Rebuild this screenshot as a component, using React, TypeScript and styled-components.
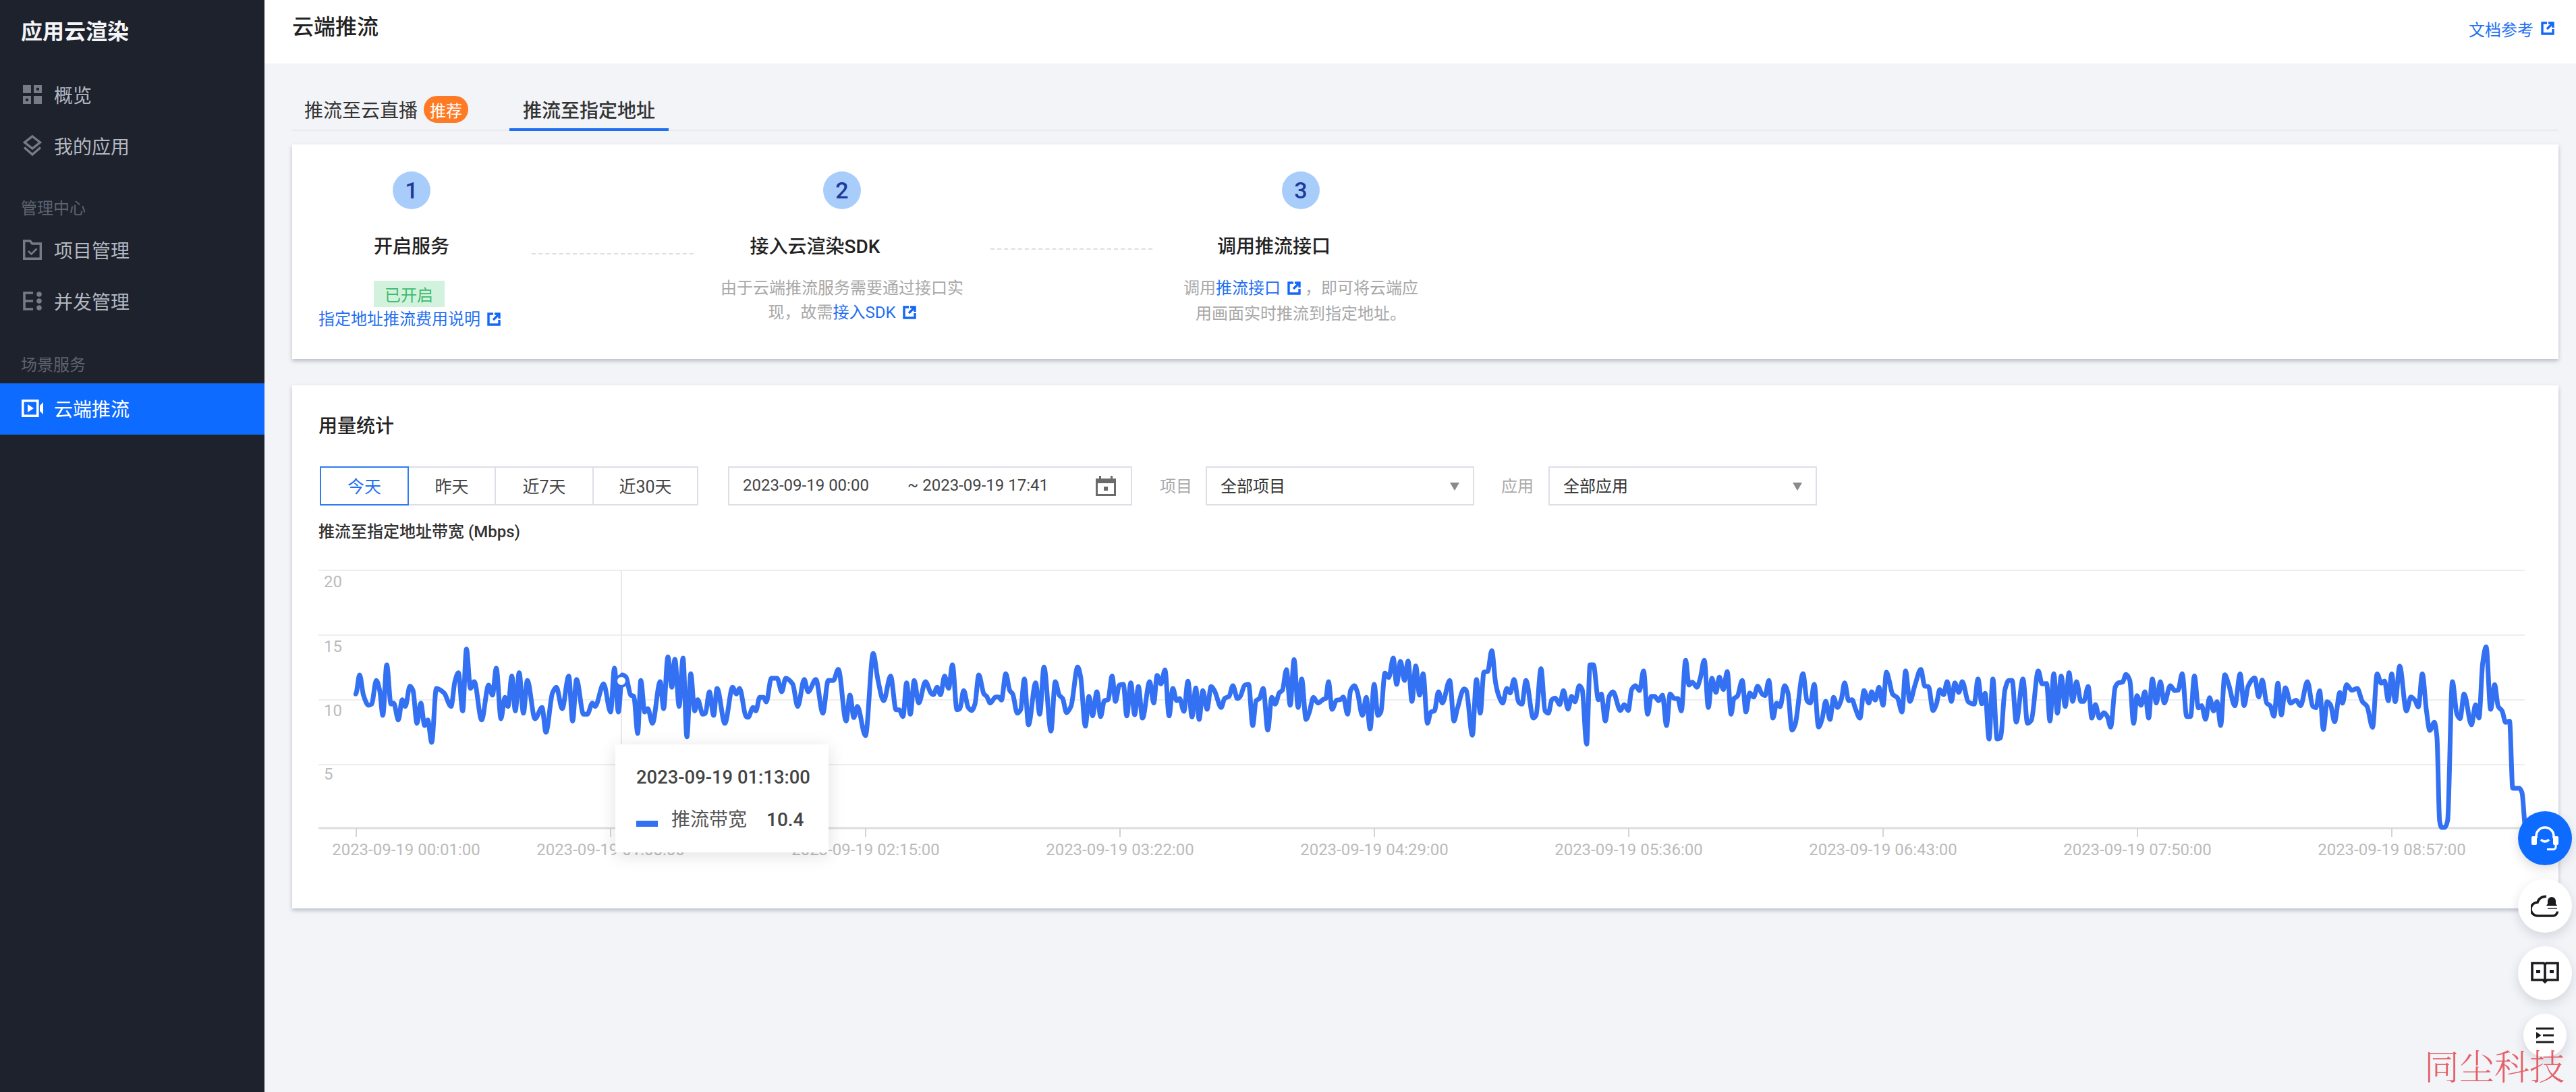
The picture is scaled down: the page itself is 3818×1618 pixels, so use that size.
import React from "react";
import styled, { createGlobalStyle } from "styled-components";

const GlobalStyle = createGlobalStyle`
  html, body { margin: 0; padding: 0; height: 100%; background: #f2f4f8; }
  body { font-family: Roboto, "Noto Sans CJK SC", sans-serif; color: #222; overflow: hidden; }
  #root { height: 100%; }
  * { box-sizing: border-box; }
`;

const Shell = styled.div`display: flex; height: 1618px; width: 3818px; position: relative; overflow: hidden;`;

/* ---------- sidebar ---------- */
const Sidebar = styled.aside`width: 392px; flex: none; background: #1e222d; display: flex; flex-direction: column;`;
const Logo = styled.div`height: 103px; padding: 24px 0 0 31px; font-size: 32px; line-height: 46px; font-weight: 700; color: #f4f5f7;`;
const NavRow = styled.div<{ $active?: boolean }>`
  height: 76px; display: flex; align-items: center; gap: 18px; padding: 0 0 2px 34px;
  font-size: 28px; color: ${p => (p.$active ? "#fff" : "#b4b8c1")};
  background: ${p => (p.$active ? "#0d6bff" : "transparent")};
`;
const NavIcon = styled.span<{ $active?: boolean }>`
  width: 28px; height: 28px; display: flex; align-items: center; justify-content: center; flex: none;
  color: ${p => (p.$active ? "#fff" : "#767c87")};
  svg { overflow: visible; flex: none; }
`;
const SectionLabel = styled.div<{ $top: number; $bottom: number }>`
  padding: ${p => p.$top}px 0 ${p => p.$bottom}px 31px; font-size: 24px; line-height: 34px; color: #5d636e;
`;

/* ---------- main ---------- */
const Main = styled.main`flex: 1; min-width: 0; display: flex; flex-direction: column;`;
const Header = styled.header`
  height: 94px; flex: none; background: #fff; display: flex; justify-content: space-between; align-items: flex-start;
  padding: 16px 32px 0 41px;
`;
const PageTitle = styled.h1`margin: 0; font-size: 32px; line-height: 48px; font-weight: 500; color: #222;`;
const DocLink = styled.a`display: flex; align-items: center; gap: 11px; margin-top: 2px; height: 48px; font-size: 24px; color: #1f6ff2;`;
const Body = styled.div`flex: 1; padding: 36px 26px 0 41px; display: flex; flex-direction: column;`;

const Tabs = styled.div`display: flex; gap: 41px; height: 64px; padding-left: 0; border-bottom: 2px solid #e7eaef; flex: none;`;
const Tab = styled.div<{ $active?: boolean; $first?: boolean }>`
  height: 64px; padding: 4px 20px 0 ${p => (p.$first ? 18 : 20)}px; display: flex; align-items: center; gap: 9px; font-size: 28px; color: #333;
  font-weight: ${p => (p.$active ? 500 : 400)};
  border-bottom: 4px solid ${p => (p.$active ? "#1f6ff2" : "transparent")};
`;
const Badge = styled.span`
  width: 66px; height: 40px; border-radius: 20px; background: #ff7a24; color: #fff; font-size: 24px;
  display: flex; align-items: center; justify-content: center;
`;

const Card = styled.section<{ $height: number; $top: number }>`
  height: ${p => p.$height}px; margin-top: ${p => p.$top}px; flex: none; background: #fff; padding: 0 50px 0 39px;
  box-shadow: 0 3px 6px rgba(54, 58, 80, 0.3);
`;

const Steps = styled.div`display: flex; gap: 40px; align-items: flex-start; padding-top: 40px;`;
const Step = styled.div<{ $width: number }>`
  width: ${p => p.$width}px; flex: none; display: flex; flex-direction: column; align-items: center;
`;
const StepNum = styled.div`
  width: 56px; height: 56px; border-radius: 50%; background: #a9cdfb; color: #1d3a9d; font-size: 34px; font-weight: 500;
  display: flex; align-items: center; justify-content: center;
`;
const StepTitle = styled.div<{ $shift?: number }>`
  margin-top: 36px; margin-right: ${p => p.$shift ?? 0}px; font-size: 28px; line-height: 40px; font-weight: 500; color: #222; white-space: nowrap;
`;
const StatusTag = styled.div`
  margin-top: 30px; margin-right: 8px; width: 105px; height: 39px; background: #d2f2dd; color: #3dbb6b; font-size: 24px;
  display: flex; align-items: center; justify-content: center;
`;
const LinkText = styled.a<{ $shift?: number }>`
  color: #1f6ff2; font-size: 24px; line-height: 36px; white-space: nowrap; margin-right: ${p => p.$shift ?? 0}px;
`;
const ExtIconWrap = styled.span`display: inline-block; margin: 0 0 0 10px; vertical-align: -2px;`;
const StepDesc = styled.div`margin-top: 23px; font-size: 24px; line-height: 36px; color: #a8a8a8; text-align: center;`;
const DashLine = styled.div<{ $top: number }>`
  width: 240px; flex: none; margin-top: ${p => p.$top}px; border-top: 2px dashed #dedede;
`;

const CardTitle = styled.h2`margin: 0; padding-top: 41px; font-size: 28px; line-height: 40px; font-weight: 500; color: #222;`;
const Toolbar = styled.div`display: flex; align-items: stretch; height: 58px; margin: 39px 0 0 2px;`;
const Segment = styled.div`display: flex;`;
const SegBtn = styled.div<{ $width: number; $active?: boolean }>`
  width: ${p => p.$width}px; margin-left: -2px; padding-bottom: 3px; display: flex; align-items: center; justify-content: center; font-size: 25px;
  border: 2px solid ${p => (p.$active ? "#2f7bf0" : "#dcdfe6")};
  color: ${p => (p.$active ? "#1f6ff2" : "#444")};
  position: relative; z-index: ${p => (p.$active ? 1 : 0)};
  &:first-child { margin-left: 0; }
`;
const DateBox = styled.div`
  width: 599px; margin-left: 44px; border: 2px solid #dcdfe6; display: flex; align-items: center; padding: 0 22px 3px 20px;
  font-size: 24px; color: #444;
`;
const DateEnd = styled.span`margin-left: 57px; flex: 1;`;
const CalendarSlot = styled.span`display: flex; margin-top: 3px;`;
const FieldLabel = styled.span<{ $left: number; $width: number }>`
  margin-left: ${p => p.$left}px; width: ${p => p.$width}px; flex: none; padding-bottom: 3px; display: flex; align-items: center; font-size: 24px; color: #aaa;
`;
const Select = styled.div`
  width: 398px; border: 2px solid #dcdfe6; padding: 0 0 3px 20px; display: flex; align-items: center; font-size: 24px; color: #333;
  position: relative;
  &::after {
    content: ""; position: absolute; right: 20px; top: 22px; width: 0; height: 0;
    border-left: 7px solid transparent; border-right: 7px solid transparent; border-top: 12px solid #8a8a8a;
  }
`;
const ChartTitle = styled.div`margin-top: 21px; font-size: 24px; line-height: 36px; font-weight: 500; color: #333;`;
const ChartArea = styled.div`position: relative; width: 3270px; height: 430px; margin-top: 39px;`;
const ChartSvg = styled.svg`display: block; overflow: visible;`;
const GridLine = styled.line`stroke: #eeeeee; stroke-width: 2;`;
const AxisLine = styled.line`stroke: #dedede; stroke-width: 3;`;
const Tick = styled.line`stroke: #d4d4d4; stroke-width: 2;`;
const Crosshair = styled.line`stroke: #e9e9e9; stroke-width: 2;`;
const SeriesLine = styled.path`fill: none; stroke: #3371f2; stroke-width: 7; stroke-linejoin: round; stroke-linecap: round;`;
const HoverDot = styled.circle`fill: #fff; stroke: #3371f2; stroke-width: 4;`;
const AxisText = styled.text`fill: #bbbbbb; font-size: 24px; font-family: Roboto, "Noto Sans CJK SC", sans-serif;`;

const Tooltip = styled.div`
  position: absolute; left: 440px; top: 258px; width: 316px; height: 160px; background: #fff; padding: 28px 0 0 31px;
  box-shadow: 0 4px 24px rgba(0, 0, 0, 0.12); display: flex; flex-direction: column; gap: 22px;
`;
const TooltipTime = styled.div`font-size: 27.4px; line-height: 42px; font-weight: 500; color: #444; white-space: nowrap;`;
const TooltipRow = styled.div`display: flex; align-items: center; font-size: 28px; line-height: 40px; color: #555;`;
const TooltipMark = styled.span`width: 32px; height: 9px; background: #3371f2; margin: 10px 20px 0 0;`;
const TooltipValue = styled.b`margin-left: 29px; font-weight: 500; color: #444;`;

/* ---------- overlays ---------- */
const FloatDock = styled.div`
  position: absolute; right: 6px; top: 1202px; width: 80px; display: flex; flex-direction: column; align-items: center; gap: 20px;
`;
const FloatBtn = styled.div<{ $primary?: boolean; $size?: number }>`
  width: ${p => p.$size ?? 80}px; height: ${p => p.$size ?? 80}px; border-radius: 50%;
  background: ${p => (p.$primary ? "#0d6bff" : "#fff")}; color: ${p => (p.$primary ? "#fff" : "#1b1b1f")};
  display: flex; align-items: center; justify-content: center;
  box-shadow: 0 6px 16px rgba(54, 58, 80, 0.16);
`;
const Watermark = styled.div`
  position: absolute; left: 3593px; top: 1546px; font-size: 52px; line-height: 64px; letter-spacing: 0; white-space: nowrap;
  color: rgba(226, 70, 80, 0.85); font-family: "Noto Serif CJK SC", "Liberation Serif", "Noto Sans CJK SC", serif; font-weight: 300;
`;

/* ---------- icons ---------- */
const ExtIcon = () => (
  <svg width="20" height="20" viewBox="0 0 20 20" fill="none" stroke="#1268f5" strokeWidth="3.4">
    <path d="M9 2H2v16h16v-7" />
    <path d="M11 2h7v7" />
    <path d="M17 3l-8 8" />
  </svg>
);
const GridIcon = () => (
  <svg width="28" height="28" viewBox="0 0 28 28" fill="currentColor" fillRule="evenodd">
    <rect x="0" y="0" width="12" height="12" />
    <path d="M16 0h12v12H16zM20 4v4h4V4z" />
    <path d="M0 16h12v12H0zM4 20v4h4v-4z" />
    <rect x="16" y="16" width="12" height="12" />
  </svg>
);
const LayersIcon = () => (
  <svg width="28" height="32" viewBox="0 0 28 32" fill="none" stroke="currentColor" strokeWidth="3.4">
    <path d="M14 2l11.5 9L14 20 2.5 11z" />
    <path d="M2 18.5L14 29l12-10.5" />
  </svg>
);
const FolderIcon = () => (
  <svg width="28" height="30" viewBox="0 0 28 30" fill="none" stroke="currentColor" strokeWidth="3.4">
    <path d="M1.7 2h9l3 4h12.6v22.3H1.700z" />
    <path d="M8 17l4.500 4.500 8-8" strokeWidth="2.600" />
  </svg>
);
const ConcurrencyIcon = () => (
  <svg width="28" height="30" viewBox="0 0 28 30" fill="none" stroke="currentColor" strokeWidth="3.6">
    <path d="M15 3H2v24h13M2 15h13" />
    <g fill="currentColor" stroke="none">
      <circle cx="24" cy="5" r="3.800" />
      <circle cx="24" cy="15" r="3.800" />
      <circle cx="24" cy="25" r="3.800" />
    </g>
  </svg>
);
const VideoIcon = () => (
  <svg width="32" height="26" viewBox="0 0 32 26" fill="none">
    <rect x="1.800" y="1.800" width="22" height="22.400" stroke="currentColor" strokeWidth="3.600" />
    <path d="M9 7l9 6-9 6z" fill="currentColor" />
    <path d="M27 9l5-5v18l-5-5z" fill="currentColor" />
  </svg>
);
const CalendarIcon = () => (
  <svg width="30" height="30" viewBox="0 0 30 30" fill="#6b6b6b">
    <path d="M5 0h3v4h14V0h3v4h5v26H0V4h5zM3 11v16h24V11z" />
    <rect x="12" y="16" width="6" height="6" />
  </svg>
);
const HeadsetIcon = () => (
  <svg width="42" height="40" viewBox="0 0 42 40" fill="none" stroke="currentColor" strokeWidth="3.600">
    <path d="M8 20v-3a13 13 0 0 1 26 0v3" />
    <rect x="1" y="17" width="8" height="13" rx="2" fill="currentColor" stroke="none" />
    <rect x="33" y="17" width="8" height="13" rx="2" fill="currentColor" stroke="none" />
    <path d="M15 22q6 6 12 0" />
    <path d="M37 30v3a3.500 3.500 0 0 1-3.500 3.500H24" strokeWidth="3" />
  </svg>
);
const CloudBellIcon = () => (
  <svg width="42" height="34" viewBox="0 0 42 34" fill="none" stroke="currentColor" strokeWidth="3.600">
    <path d="M23 3.500A12 12 0 0 0 10 12a9.500 9.500 0 0 0 0 20h22a7 7 0 0 0 7.500-6.500" />
    <path d="M25 14v-4a6 6 0 0 1 12 0v4l2 3H23z" fill="currentColor" stroke="none" />
    <path d="M25 21h14" strokeWidth="2" opacity="0.7" />
  </svg>
);
const BookIcon = () => (
  <svg width="42" height="34" viewBox="0 0 42 34" fill="none" stroke="currentColor" strokeWidth="3.600">
    <path d="M2 2h17l2 2 2-2h17v25H24l-3 3-3-3H2z" />
    <path d="M21 4v24" />
    <rect x="8" y="12" width="6" height="5" fill="currentColor" stroke="none" />
    <rect x="28" y="12" width="6" height="5" fill="currentColor" stroke="none" />
  </svg>
);
const IndentIcon = () => (
  <svg width="26" height="24" viewBox="0 0 26 24" fill="none" stroke="currentColor" strokeWidth="2.800">
    <path d="M0 2h26M10 12h16M0 22h26" />
    <path d="M0 7l7.500 5L0 17z" fill="currentColor" stroke="none" />
  </svg>
);

/* ---------- chart data, traced from the picture as [x, y] in page pixels ---------- */
type Pt = [number, number];
const seg = (x0: number, y0: number, sx: number, sy: number, raw: number[]): Pt[] => {
  const out: Pt[] = [];
  for (let i = 0; i < raw.length; i += 2) out.push([x0 + raw[i] / sx, y0 + raw[i + 1] / sy]);
  return out;
};
const traced: Pt[] = [
  ...seg(440, 820, 1.742, 3, [152,625,162,540,172,630,185,675,193,670,205,565,214,610,222,720,232,495,243,670,250,665,262,740,272,650,280,680,292,590,300,610,310,755,320,665,330,765,338,740,348,840,360,600,380,620,398,680,408,570,417,530,428,700,438,425,448,600,458,570,477,740,495,585,505,630,515,510,527,735,537,640,545,680,555,545,564,700,574,530,585,710,595,565,615,735,633,685,643,795,660,620,670,595,685,690,702,545,712,745,722,560,740,715,750,715,763,665,770,680,792,580,810,705,820,510,830,705,840,540,850,550,862,630,870,635,880,800,888,565,898,705,906,690,918,755,938,570,947,690,958,460,968,595,976,470,987,680,997,465,1007,815,1017,535,1027,700,1035,650,1048,715,1055,710,1065,615,1076,720,1085,600,1105,755,1125,595,1135,625,1143,600,1160,725,1165,728,1178,685,1185,700,1195,640,1205,640,1212,660,1225,555,1240,555,1252,615,1262,555,1280,580,1293,680,1310,560,1320,615,1340,560,1358,710,1372,565,1385,565,1398,515,1418,745,1428,630,1438,730,1447,680,1468,810,1488,445,1500,560,1515,655,1533,545,1547,695,1555,695,1565,725]),
  ...seg(1330, 940, 3, 3, [41,215,58,355,75,205,95,305,125,210,150,262,160,268,177,235,192,268,210,185,228,240,245,135,265,335,278,330,295,250,315,325,330,338,345,310,362,180,385,265,397,275,413,305,437,278,450,278,463,292,482,175,500,250,513,265,533,350,548,335,565,198,583,402,615,215,633,355,652,145,683,430,702,210,720,270,735,285,752,348,772,320,802,145,815,190,836,408,852,275,868,362,887,255,904,365,920,295,937,290,955,185,970,298,987,225,1005,222,1020,362,1038,215,1055,357,1072,232,1090,372,1122,210,1140,305,1155,182,1172,220,1190,158,1208,362,1225,240,1242,295,1255,285,1274,342,1292,208,1310,367,1327,238,1342,378,1358,250,1377,333,1395,232,1410,250,1440,325]),
  ...seg(1810, 940, 3, 3, [15,285,35,275,52,228,72,285,85,275,105,225,122,222,140,405,155,295,170,285,187,240,207,425,225,280,240,310,258,260,272,248,290,157,307,315,324,112,342,325,358,198,377,378,392,345,410,280,430,305,455,288,465,285,477,210,493,333,513,292,530,290,543,278,562,355,575,250,592,228,605,255,628,360,645,280,662,420,680,222,697,360,710,345,728,172,745,192,765,105,780,222,797,120,815,205,831,118,848,298,865,140,882,270,898,175,917,395,932,345,948,340,966,255,983,305,1016,205,1035,385,1050,330,1080,242,1090,250,1117,448,1135,200,1152,350,1168,168,1185,165,1203,72,1220,215,1235,275,1252,305,1270,240,1285,260,1302,200,1322,300,1337,310,1355,205,1388,372,1400,360,1422,152,1440,340]),
  ...seg(2290, 940, 3, 3, [15,350,30,290,45,283,65,312,82,250,102,332,118,275,133,300,152,228,165,245,185,488,200,135,215,135,237,290,250,265,268,385,285,275,302,255,335,338,352,312,370,338,385,245,402,228,420,250,438,162,456,355,472,275,487,275,505,295,522,270,540,405,556,265,575,285,590,285,606,340,625,115,640,225,655,212,675,235,690,195,708,115,726,325,742,195,760,258,775,190,793,245,810,165,827,355,840,285,855,275,877,205,893,345,910,260,928,278,945,230,965,265,978,272,995,205,1013,372,1030,305,1045,322,1065,228,1080,260,1098,425,1112,400,1147,175,1165,295,1180,305,1197,222,1216,412,1232,375,1248,297,1267,378,1283,280,1300,325,1317,290,1332,215,1350,295,1365,290,1380,330,1400,372,1418,250,1440,305]),
  ...seg(2770, 940, 3, 3, [12,255,28,292,45,235,63,315,78,168,90,205,105,265,127,282,147,345,163,162,182,298,205,225,231,155,248,230,265,232,285,338,300,310,315,245,332,268,348,210,367,298,382,215,400,258,415,210,442,300,468,310,485,198,502,308,517,262,534,465,551,198,570,465,585,460,605,245,622,205,637,205,655,390,685,198,705,395,722,382,753,162,770,220,790,218,805,385,822,175,838,350,855,185,873,320,890,170,906,298,923,210,943,298,955,298,975,232,991,372,1007,312,1025,372,1045,348,1060,365,1075,412,1095,235,1110,215,1128,212,1143,178,1160,205,1177,395,1192,272,1210,315,1227,255,1244,372,1260,198,1278,305,1296,210,1313,305,1340,228,1360,250,1375,248,1393,175,1413,365,1430,365]),
  ...seg(3200, 900, 2.537, 2.184, [133,222,148,325,160,318,175,362,190,292,205,335,218,305,232,382,247,218,262,250,285,318,305,215,320,318,335,255,360,228,375,290,388,235,405,310,418,318,432,352,447,245,460,348,475,260,495,310,515,300,532,318,558,240,578,320,590,325,604,270,618,395,632,305,645,315,660,370,680,275,690,310,705,250,725,268,745,262,765,305,782,320,803,388,820,215,835,245,848,238,862,302,875,215,888,305,905,190,930,335,947,290,962,300,975,322,990,215,1005,330,1018,398,1035,372,1045,420,1055,690,1062,712,1075,712,1085,690,1103,240,1120,345,1132,360,1147,280,1175,380,1190,315,1203,358,1217,180,1230,128,1247,330,1262,250,1275,320,1290,335,1303,372,1318,368,1330,585,1355,585,1365,600,1378,712]),
];

/* smooth line through the points, flat at each turning point */
const smoothPath = (pts: Pt[]): string => {
  const m = pts.map((p, i) => {
    if (i === 0 || i === pts.length - 1) return 0;
    const a = (p[1] - pts[i - 1][1]) / (p[0] - pts[i - 1][0]);
    const b = (pts[i + 1][1] - p[1]) / (pts[i + 1][0] - p[0]);
    return a * b <= 0 ? 0 : (2 * a * b) / (a + b);
  });
  let d = `M${pts[0][0].toFixed(1)} ${pts[0][1].toFixed(1)}`;
  for (let i = 1; i < pts.length; i++) {
    const [x0, y0] = pts[i - 1];
    const [x1, y1] = pts[i];
    const h = (x1 - x0) / 3;
    d += `C${(x0 + h).toFixed(1)} ${(y0 + m[i - 1] * h).toFixed(1)} ${(x1 - h).toFixed(1)} ${(y1 - m[i] * h).toFixed(1)} ${x1.toFixed(1)} ${y1.toFixed(1)}`;
  }
  return d;
};

const gridY = [845, 941, 1037, 1133];
const yLabels = [["20", 870], ["15", 966], ["10", 1061], ["5", 1155]] as const;
const ticks: [number, number, string][] = [
  [528, 602, "2023-09-19 00:01:00"],
  [905, 905, "2023-09-19 01:08:00"],
  [1283, 1283, "2023-09-19 02:15:00"],
  [1660, 1660, "2023-09-19 03:22:00"],
  [2037, 2037, "2023-09-19 04:29:00"],
  [2414, 2414, "2023-09-19 05:36:00"],
  [2791, 2791, "2023-09-19 06:43:00"],
  [3168, 3168, "2023-09-19 07:50:00"],
  [3545, 3545, "2023-09-19 08:57:00"],
];

const Chart = () => (
  <ChartArea>
    <ChartSvg width="3270" height="430" viewBox="472 845 3270 430">
      {gridY.map(y => <GridLine key={y} x1="472" x2="3742" y1={y} y2={y} />)}
      <AxisLine x1="472" x2="3742" y1="1227" y2="1227" />
      {ticks.map(t => <Tick key={t[0]} x1={t[0]} x2={t[0]} y1="1227" y2="1240" />)}
      {yLabels.map(([txt, y]) => <AxisText key={txt} x="480" y={y}>{txt}</AxisText>)}
      {ticks.map(t => <AxisText key={t[2]} x={t[1]} y="1267" textAnchor="middle">{t[2]}</AxisText>)}
      <Crosshair x1="921" x2="921" y1="845" y2="1227" />
      <SeriesLine d={smoothPath(traced)} />
      <HoverDot cx="921" cy="1009" r="8" />
    </ChartSvg>
    <Tooltip>
      <TooltipTime>2023-09-19 01:13:00</TooltipTime>
      <TooltipRow>
        <TooltipMark />
        推流带宽
        <TooltipValue>10.4</TooltipValue>
      </TooltipRow>
    </Tooltip>
  </ChartArea>
);

export default function App() {
  return (
    <Shell>
      <GlobalStyle />
      <Sidebar>
        <Logo>应用云渲染</Logo>
        <NavRow><NavIcon><GridIcon /></NavIcon>概览</NavRow>
        <NavRow><NavIcon><LayersIcon /></NavIcon>我的应用</NavRow>
        <SectionLabel $top={37} $bottom={7}>管理中心</SectionLabel>
        <NavRow><NavIcon><FolderIcon /></NavIcon>项目管理</NavRow>
        <NavRow><NavIcon><ConcurrencyIcon /></NavIcon>并发管理</NavRow>
        <SectionLabel $top={39} $bottom={10}>场景服务</SectionLabel>
        <NavRow $active><NavIcon $active><VideoIcon /></NavIcon>云端推流</NavRow>
      </Sidebar>
      <Main>
        <Header>
          <PageTitle>云端推流</PageTitle>
          <DocLink>文档参考<ExtIcon /></DocLink>
        </Header>
        <Body>
          <Tabs>
            <Tab $first>推流至云直播<Badge>推荐</Badge></Tab>
            <Tab $active>推流至指定地址</Tab>
          </Tabs>
          <Card $height={318} $top={20}>
            <Steps>
              <Step $width={276}>
                <StepNum>1</StepNum>
                <StepTitle>开启服务</StepTitle>
                <StatusTag>已开启</StatusTag>
                <LinkText $shift={6}>指定地址推流费用说明<ExtIconWrap><ExtIcon /></ExtIconWrap></LinkText>
              </Step>
              <DashLine $top={121} />
              <Step $width={360}>
                <StepNum>2</StepNum>
                <StepTitle $shift={80}>接入云渲染SDK</StepTitle>
                <StepDesc>
                  由于云端推流服务需要通过接口实<br />
                  现，故需<LinkText>接入SDK<ExtIconWrap><ExtIcon /></ExtIconWrap></LinkText>
                </StepDesc>
              </Step>
              <DashLine $top={114} />
              <Step $width={360}>
                <StepNum>3</StepNum>
                <StepTitle $shift={80}>调用推流接口</StepTitle>
                <StepDesc>
                  调用<LinkText>推流接口<ExtIconWrap><ExtIcon /></ExtIconWrap></LinkText>{"  "}，即可将云端应<br />
                  用画面实时推流到指定地址。
                </StepDesc>
              </Step>
            </Steps>
          </Card>
          <Card $height={775} $top={39}>
            <CardTitle>用量统计</CardTitle>
            <Toolbar>
              <Segment>
                <SegBtn $width={132} $active>今天</SegBtn>
                <SegBtn $width={131}>昨天</SegBtn>
                <SegBtn $width={147}>近7天</SegBtn>
                <SegBtn $width={157}>近30天</SegBtn>
              </Segment>
              <DateBox>
                <span>2023-09-19 00:00</span>
                <DateEnd>~ 2023-09-19 17:41</DateEnd>
                <CalendarSlot><CalendarIcon /></CalendarSlot>
              </DateBox>
              <FieldLabel $left={41} $width={68}>项目</FieldLabel>
              <Select>全部项目</Select>
              <FieldLabel $left={40} $width={70}>应用</FieldLabel>
              <Select>全部应用</Select>
            </Toolbar>
            <ChartTitle>推流至指定地址带宽 (Mbps)</ChartTitle>
            <Chart />
          </Card>
        </Body>
      </Main>
      <FloatDock>
        <FloatBtn $primary><HeadsetIcon /></FloatBtn>
        <FloatBtn><CloudBellIcon /></FloatBtn>
        <FloatBtn><BookIcon /></FloatBtn>
        <FloatBtn $size={64}><IndentIcon /></FloatBtn>
      </FloatDock>
      <Watermark>同尘科技</Watermark>
    </Shell>
  );
}
